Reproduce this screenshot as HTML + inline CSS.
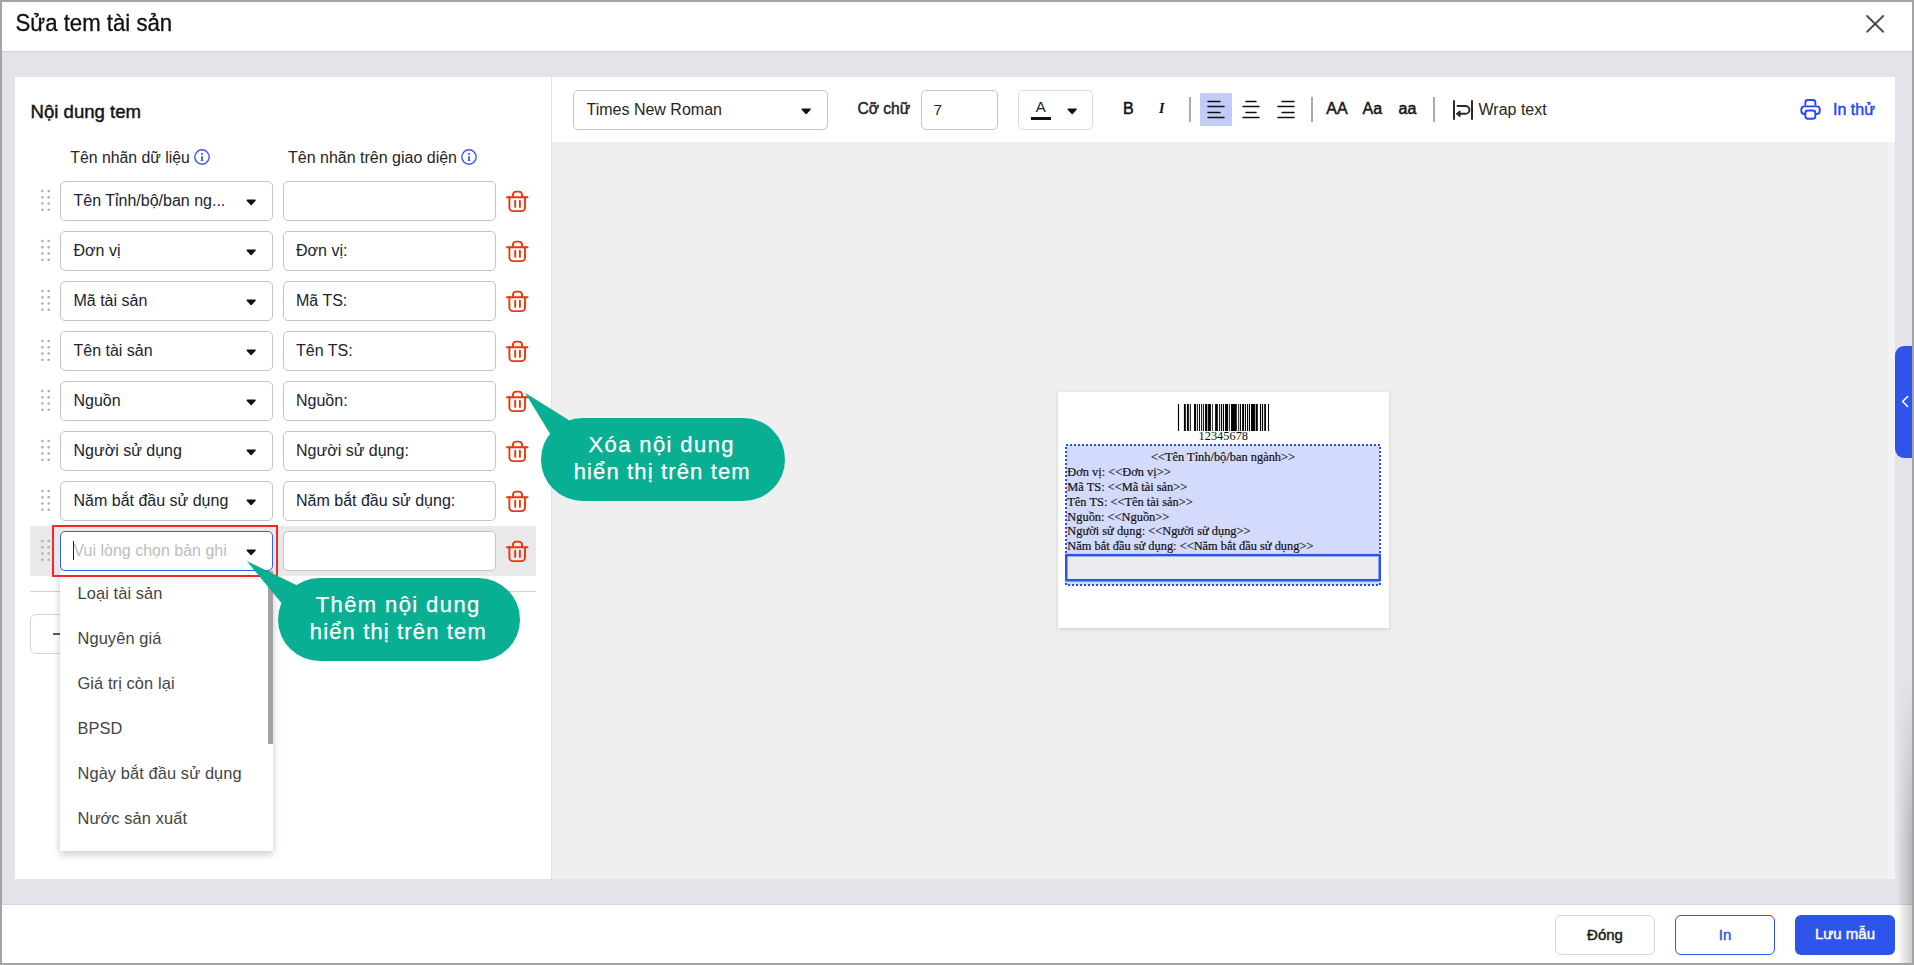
<!DOCTYPE html>
<html><head><meta charset="utf-8"><style>
*{box-sizing:border-box;margin:0;padding:0}
html,body{width:1914px;height:965px;overflow:hidden;background:#a4a4a4;font-family:"Liberation Sans",sans-serif;color:#1f1f1f}
.a{position:absolute}
#dlg{position:absolute;left:2px;top:2px;width:1910px;height:961px;background:#e2e4e9;overflow:hidden}
.t{position:absolute;white-space:nowrap;line-height:1}
.t16{position:absolute;white-space:nowrap;line-height:1;font-size:16px;color:#202330}
.box{position:absolute;border:1px solid #c4c4c4;border-radius:5px;background:#fff}
.btn{position:absolute;height:40px;width:100px;border-radius:6px;font-size:14px;text-align:center}
svg{overflow:visible}
</style></head><body>
<svg width="0" height="0" style="position:absolute"><defs>
<symbol id="trash" viewBox="0 0 26 26"><g fill="none" stroke="#e8380d" stroke-width="1.9" stroke-linecap="round" stroke-linejoin="round"><path d="M1.95 8.2H22.55"/><path d="M8 8.2V5.8A3.2 3.2 0 0 1 11.2 2.6H13.8A3.2 3.2 0 0 1 17 5.8V8.2"/><path d="M4.4 8.2V18.5A3.6 3.6 0 0 0 8 22.1H16.4A3.6 3.6 0 0 0 20 18.5V8.2"/><path d="M10.2 11.8V17.9M14.9 11.8V17.9"/></g></symbol>
<symbol id="dots" viewBox="0 0 12 24"><g fill="#acacb2"><circle cx="2.4" cy="1.9" r="1.25"/><circle cx="8.7" cy="1.9" r="1.25"/><circle cx="2.4" cy="8.3" r="1.25"/><circle cx="8.7" cy="8.3" r="1.25"/><circle cx="2.4" cy="14.5" r="1.25"/><circle cx="8.7" cy="14.5" r="1.25"/><circle cx="2.4" cy="20.7" r="1.25"/><circle cx="8.7" cy="20.7" r="1.25"/></g></symbol>
<symbol id="arr" viewBox="0 0 12 8"><path d="M1.2 1.2H9.1L5.15 5.6Z" fill="#111" stroke="#111" stroke-width="1.4" stroke-linejoin="round"/></symbol>
<symbol id="info" viewBox="0 0 18 18"><circle cx="9" cy="9" r="7.2" fill="none" stroke="#3a58f0" stroke-width="1.4"/><rect x="8.1" y="5" width="1.8" height="1.8" fill="#3a58f0"/><path d="M8.1 8.2H9.9V12.3H10.3V13H7.7V12.3H8.1Z" fill="#3a58f0"/></symbol>
</defs></svg>
<div class="a" style="left:2px;top:2px;width:1910px;height:961px;background:#e2e4e9"></div>
<div class="a" style="left:2px;top:2px;width:1910px;height:50px;background:#fff;border-bottom:1px solid #cdd0d5"></div>
<div class="t" style="left:15.5px;top:12.81px;font-size:22.2px;color:#111;-webkit-text-stroke:0.3px #111;transform:scaleY(1.06);transform-origin:0 18.8px">Sửa tem tài sản</div>
<svg class="a" style="left:1862px;top:11px" width="26" height="26"><path d="M5.1 5L21.2 20.7M21.2 5L5.1 20.7" stroke="#4a4a4a" stroke-width="1.9" stroke-linecap="round" fill="none"/></svg>
<div class="a" style="left:15px;top:77px;width:536px;height:802px;background:#fff"></div>
<div class="a" style="left:551px;top:77px;width:1344px;height:802px;background:#efefef;border-left:1px solid #e3e3e3"></div>
<div class="a" style="left:552px;top:77px;width:1343px;height:65px;background:#fff"></div>
<div class="a" style="left:2px;top:904px;width:1910px;height:59px;background:#fff;border-top:1px solid #d5d7dc"></div>
<div class="btn" style="left:1555px;top:915px;border:1px solid #d6d6d6;color:#1a1a1a;background:#fff"><span class="t" style="left:0;right:0;top:11.100000000000023px;font-size:15px;-webkit-text-stroke:0.45px currentColor">Đóng</span></div>
<div class="btn" style="left:1675px;top:915px;border:1.5px solid #2f55e8;color:#2f55e8;background:#fff"><span class="t" style="left:0;right:0;top:11.100000000000023px;font-size:15px;-webkit-text-stroke:0.45px currentColor">In</span></div>
<div class="btn" style="left:1795px;top:915px;background:#2e55eb;color:#fff"><span class="t" style="left:0;right:0;top:11.100000000000023px;font-size:15px;-webkit-text-stroke:0.45px currentColor">Lưu mẫu</span></div>
<div class="t" style="left:30.5px;top:102.86px;font-size:18.6px;color:#141414;-webkit-text-stroke:0.45px #141414">Nội dung tem</div>
<div class="t16" style="left:70.3px;top:150.43px;font-size:15.8px;color:#262626">Tên nhãn dữ liệu</div>
<svg class="a" style="left:193px;top:148px" width="18" height="18"><use href="#info"/></svg>
<div class="t16" style="left:288px;top:150.46px;color:#262626">Tên nhãn trên giao diện</div>
<svg class="a" style="left:460px;top:148px" width="18" height="18"><use href="#info"/></svg>
<svg class="a" style="left:40px;top:189px" width="12" height="24"><use href="#dots"/></svg>
<div class="box" style="left:60px;top:181px;width:213px;height:40px"></div>
<div class="t16" style="left:73.5px;top:193.36px">Tên Tỉnh/bộ/ban ng...</div>
<svg class="a" style="left:246px;top:199.2px" width="12" height="8"><use href="#arr"/></svg>
<div class="box" style="left:283px;top:181px;width:213px;height:40px"></div>
<svg class="a" style="left:505px;top:189px" width="26" height="26"><use href="#trash"/></svg>
<svg class="a" style="left:40px;top:239px" width="12" height="24"><use href="#dots"/></svg>
<div class="box" style="left:60px;top:231px;width:213px;height:40px"></div>
<div class="t16" style="left:73.5px;top:243.36px">Đơn vị</div>
<svg class="a" style="left:246px;top:249.2px" width="12" height="8"><use href="#arr"/></svg>
<div class="box" style="left:283px;top:231px;width:213px;height:40px"></div>
<div class="t16" style="left:296px;top:243.36px">Đơn vị:</div>
<svg class="a" style="left:505px;top:239px" width="26" height="26"><use href="#trash"/></svg>
<svg class="a" style="left:40px;top:289px" width="12" height="24"><use href="#dots"/></svg>
<div class="box" style="left:60px;top:281px;width:213px;height:40px"></div>
<div class="t16" style="left:73.5px;top:293.36px">Mã tài sản</div>
<svg class="a" style="left:246px;top:299.2px" width="12" height="8"><use href="#arr"/></svg>
<div class="box" style="left:283px;top:281px;width:213px;height:40px"></div>
<div class="t16" style="left:296px;top:293.36px">Mã TS:</div>
<svg class="a" style="left:505px;top:289px" width="26" height="26"><use href="#trash"/></svg>
<svg class="a" style="left:40px;top:339px" width="12" height="24"><use href="#dots"/></svg>
<div class="box" style="left:60px;top:331px;width:213px;height:40px"></div>
<div class="t16" style="left:73.5px;top:343.36px">Tên tài sản</div>
<svg class="a" style="left:246px;top:349.2px" width="12" height="8"><use href="#arr"/></svg>
<div class="box" style="left:283px;top:331px;width:213px;height:40px"></div>
<div class="t16" style="left:296px;top:343.36px">Tên TS:</div>
<svg class="a" style="left:505px;top:339px" width="26" height="26"><use href="#trash"/></svg>
<svg class="a" style="left:40px;top:389px" width="12" height="24"><use href="#dots"/></svg>
<div class="box" style="left:60px;top:381px;width:213px;height:40px"></div>
<div class="t16" style="left:73.5px;top:393.36px">Nguồn</div>
<svg class="a" style="left:246px;top:399.2px" width="12" height="8"><use href="#arr"/></svg>
<div class="box" style="left:283px;top:381px;width:213px;height:40px"></div>
<div class="t16" style="left:296px;top:393.36px">Nguồn:</div>
<svg class="a" style="left:505px;top:389px" width="26" height="26"><use href="#trash"/></svg>
<svg class="a" style="left:40px;top:439px" width="12" height="24"><use href="#dots"/></svg>
<div class="box" style="left:60px;top:431px;width:213px;height:40px"></div>
<div class="t16" style="left:73.5px;top:443.36px">Người sử dụng</div>
<svg class="a" style="left:246px;top:449.2px" width="12" height="8"><use href="#arr"/></svg>
<div class="box" style="left:283px;top:431px;width:213px;height:40px"></div>
<div class="t16" style="left:296px;top:443.36px">Người sử dụng:</div>
<svg class="a" style="left:505px;top:439px" width="26" height="26"><use href="#trash"/></svg>
<svg class="a" style="left:40px;top:489px" width="12" height="24"><use href="#dots"/></svg>
<div class="box" style="left:60px;top:481px;width:213px;height:40px"></div>
<div class="t16" style="left:73.5px;top:493.36px">Năm bắt đầu sử dụng</div>
<svg class="a" style="left:246px;top:499.2px" width="12" height="8"><use href="#arr"/></svg>
<div class="box" style="left:283px;top:481px;width:213px;height:40px"></div>
<div class="t16" style="left:296px;top:493.36px">Năm bắt đầu sử dụng:</div>
<svg class="a" style="left:505px;top:489px" width="26" height="26"><use href="#trash"/></svg>
<div class="a" style="left:30px;top:526px;width:506px;height:50px;background:#e9e9e9"></div>
<svg class="a" style="left:40px;top:539px" width="12" height="24"><use href="#dots"/></svg>
<div class="box" style="left:60px;top:531px;width:213px;height:40px;border:1.5px solid #2f62f5"></div>
<div class="t16" style="left:73.5px;top:543.36px;color:#bdbdbd">Vui lòng chọn bản ghi</div>
<div class="a" style="left:73px;top:541px;width:1px;height:19px;background:#222"></div>
<svg class="a" style="left:246px;top:549.2px" width="12" height="8"><use href="#arr"/></svg>
<div class="box" style="left:283px;top:531px;width:213px;height:40px"></div>
<svg class="a" style="left:505px;top:539px" width="26" height="26"><use href="#trash"/></svg>
<div class="a" style="left:30px;top:591px;width:506px;height:1px;background:#cfd0d8"></div>
<div class="a" style="left:30px;top:614px;width:150px;height:40px;border:1px solid #d5d5dc;border-radius:6px;background:#fff"></div>
<div class="a" style="left:53px;top:633px;width:10px;height:2px;background:#555a6a"></div>
<div class="a" style="left:60px;top:571px;width:213px;height:280px;background:#fff;box-shadow:0 3px 8px rgba(0,0,0,0.22)"></div>
<div class="t16" style="left:77.5px;top:585.12px;font-size:16.4px;letter-spacing:0.1px;color:#444">Loại tài sản</div>
<div class="t16" style="left:77.5px;top:630.12px;font-size:16.4px;letter-spacing:0.1px;color:#444">Nguyên giá</div>
<div class="t16" style="left:77.5px;top:675.12px;font-size:16.4px;letter-spacing:0.1px;color:#444">Giá trị còn lại</div>
<div class="t16" style="left:77.5px;top:720.12px;font-size:16.4px;letter-spacing:0.1px;color:#444">BPSD</div>
<div class="t16" style="left:77.5px;top:765.12px;font-size:16.4px;letter-spacing:0.1px;color:#444">Ngày bắt đầu sử dụng</div>
<div class="t16" style="left:77.5px;top:810.12px;font-size:16.4px;letter-spacing:0.1px;color:#444">Nước sản xuất</div>
<div class="a" style="left:268px;top:571px;width:4.5px;height:173px;background:#a3a3a3"></div>
<div class="a" style="left:52px;top:525px;width:225.5px;height:51.8px;border:2px solid #f2282e"></div>
<div class="box" style="left:573px;top:90px;width:255px;height:40px"></div>
<div class="t16" style="left:586.5px;top:101.96px;color:#262626">Times New Roman</div>
<svg class="a" style="left:800.5px;top:107.7px" width="12" height="8"><use href="#arr"/></svg>
<div class="t" style="left:857.5px;top:101.39px;font-size:15.6px;color:#222;-webkit-text-stroke:0.45px #222">Cỡ chữ</div>
<div class="box" style="left:921px;top:90px;width:77px;height:40px"></div>
<div class="t" style="left:933.5px;top:101.88px;font-size:15.5px;color:#262626">7</div>
<div class="box" style="left:1018px;top:90px;width:75px;height:40px;border-color:#dcdcdc"></div>
<div class="t" style="left:1035.8px;top:99.0px;font-size:15px;color:#222">A</div>
<div class="a" style="left:1031px;top:117px;width:20px;height:2.6px;background:#111"></div>
<svg class="a" style="left:1066.7px;top:108.3px" width="12" height="8"><use href="#arr"/></svg>
<div class="t" style="left:1123px;top:101.06px;font-size:16px;color:#111;-webkit-text-stroke:0.5px #111">B</div>
<div class="t" style="left:1159px;top:102.18px;font-size:14px;font-weight:bold;font-style:italic;font-family:'Liberation Serif',serif;color:#111">I</div>
<div class="a" style="left:1189px;top:97px;width:2px;height:25px;background:#ababab"></div>
<div class="a" style="left:1311px;top:97px;width:2px;height:25px;background:#ababab"></div>
<div class="a" style="left:1433px;top:97px;width:2px;height:25px;background:#ababab"></div>
<div class="a" style="left:1200px;top:93px;width:32px;height:33px;background:#c3cbf8"></div>
<svg class="a" style="left:0;top:0" width="1914" height="200"><g stroke="#111" stroke-width="1.5" stroke-linecap="round"><path d="M1208 101.5H1220"/><path d="M1208 106.5H1224"/><path d="M1208 112.4H1220"/><path d="M1208 117.5H1224"/><path d="M1246 101.5H1256"/><path d="M1243 106.5H1259"/><path d="M1246 112.4H1256"/><path d="M1243 117.5H1259"/><path d="M1282 101.5H1294"/><path d="M1278 106.5H1294"/><path d="M1282 112.4H1294"/><path d="M1278 117.5H1294"/></g><g fill="none" stroke="#2a2a2a" stroke-width="2" stroke-linecap="round"><path d="M1454 101V119M1472 101V119"/><path d="M1457.5 106H1465.5A3.9 3.9 0 0 1 1465.5 113.8H1459"/></g><path d="M1456.2 113.8L1460 110.8V116.8Z" fill="#2a2a2a" stroke="#2a2a2a" stroke-width="1" stroke-linejoin="round"/><g fill="#fff" stroke="#2447f5" stroke-width="1.9" stroke-linejoin="round"><path d="M1805.35 105.5V102.5A2.45 2.45 0 0 1 1807.8 100.05H1812.9A2.45 2.45 0 0 1 1815.35 102.5V105.5" fill="none"/><rect x="1801.35" y="106.35" width="18.4" height="7.7" rx="3"/><rect x="1805.35" y="110.45" width="10" height="8.3" rx="2.5"/></g></svg>
<div class="t" style="left:1326.3px;top:101.06px;font-size:16px;color:#161616;-webkit-text-stroke:0.5px #161616">AA</div>
<div class="t" style="left:1362.5px;top:101.06px;font-size:16px;color:#161616;-webkit-text-stroke:0.5px #161616">Aa</div>
<div class="t" style="left:1398.5px;top:101.06px;font-size:16px;color:#161616;-webkit-text-stroke:0.5px #161616">aa</div>
<div class="t16" style="left:1478.5px;top:102.46px;color:#262626">Wrap text</div>
<div class="t" style="left:1833px;top:102.06px;font-size:16px;color:#2447f5;-webkit-text-stroke:0.45px #2447f5">In thử</div>
<div class="a" style="left:1058px;top:392px;width:331px;height:236px;background:#fff;box-shadow:0 1px 4px rgba(0,0,0,0.14)"></div>
<svg class="a" style="left:0;top:0" width="1914" height="700"><g fill="#000"><rect x="1177.93" y="404" width="1.15" height="27"/><rect x="1183.91" y="404" width="1.90" height="27"/><rect x="1186.95" y="404" width="1.90" height="27"/><rect x="1189.83" y="404" width="0.98" height="27"/><rect x="1194.02" y="404" width="2.13" height="27"/><rect x="1197.01" y="404" width="0.86" height="27"/><rect x="1199.02" y="404" width="0.98" height="27"/><rect x="1201.03" y="404" width="0.86" height="27"/><rect x="1202.87" y="404" width="1.03" height="27"/><rect x="1205.06" y="404" width="2.30" height="27"/><rect x="1208.05" y="404" width="2.87" height="27"/><rect x="1212.07" y="404" width="0.75" height="27"/><rect x="1215.11" y="404" width="2.70" height="27"/><rect x="1219.14" y="404" width="0.86" height="27"/><rect x="1220.86" y="404" width="1.15" height="27"/><rect x="1222.87" y="404" width="1.15" height="27"/><rect x="1225.06" y="404" width="2.99" height="27"/><rect x="1228.91" y="404" width="0.86" height="27"/><rect x="1231.03" y="404" width="5.75" height="27"/><rect x="1238.10" y="404" width="0.75" height="27"/><rect x="1239.83" y="404" width="1.15" height="27"/><rect x="1242.13" y="404" width="2.01" height="27"/><rect x="1245.00" y="404" width="0.98" height="27"/><rect x="1247.01" y="404" width="1.15" height="27"/><rect x="1249.02" y="404" width="0.98" height="27"/><rect x="1251.03" y="404" width="3.91" height="27"/><rect x="1255.63" y="404" width="2.18" height="27"/><rect x="1259.94" y="404" width="1.15" height="27"/><rect x="1261.95" y="404" width="1.15" height="27"/><rect x="1264.25" y="404" width="1.72" height="27"/><rect x="1267.99" y="404" width="0.98" height="27"/></g><rect x="1066" y="445" width="314" height="140" fill="#d3dafb" stroke="#1f4ef5" stroke-width="2" stroke-dasharray="2 2" shape-rendering="crispEdges"/><rect x="1066.25" y="555.15" width="313.5" height="25.1" fill="#ebebf0" stroke="#2b54f0" stroke-width="2.5"/></svg>
<div class="t" style="left:1198.5px;top:430.31px;font-size:12.4px;font-family:'Liberation Serif',serif;color:#111">12345678</div>
<div class="t" style="left:1065px;width:316px;text-align:center;top:451.01px;font-size:12.4px;font-family:'Liberation Serif',serif;color:#111;-webkit-text-stroke:0.2px #111">&lt;&lt;Tên Tỉnh/bộ/ban ngành&gt;&gt;</div>
<div class="t" style="left:1067.3px;top:465.88px;font-size:12.4px;font-family:'Liberation Serif',serif;color:#111;-webkit-text-stroke:0.2px #111">Đơn vị: &lt;&lt;Đơn vị&gt;&gt;</div>
<div class="t" style="left:1067.3px;top:480.75px;font-size:12.4px;font-family:'Liberation Serif',serif;color:#111;-webkit-text-stroke:0.2px #111">Mã TS: &lt;&lt;Mã tài sản&gt;&gt;</div>
<div class="t" style="left:1067.3px;top:495.62px;font-size:12.4px;font-family:'Liberation Serif',serif;color:#111;-webkit-text-stroke:0.2px #111">Tên TS: &lt;&lt;Tên tài sản&gt;&gt;</div>
<div class="t" style="left:1067.3px;top:510.5px;font-size:12.4px;font-family:'Liberation Serif',serif;color:#111;-webkit-text-stroke:0.2px #111">Nguồn: &lt;&lt;Nguồn&gt;&gt;</div>
<div class="t" style="left:1067.3px;top:525.37px;font-size:12.4px;font-family:'Liberation Serif',serif;color:#111;-webkit-text-stroke:0.2px #111">Người sử dụng: &lt;&lt;Người sử dụng&gt;&gt;</div>
<div class="t" style="left:1067.3px;top:540.24px;font-size:12.4px;font-family:'Liberation Serif',serif;color:#111;-webkit-text-stroke:0.2px #111">Năm bắt đầu sử dụng: &lt;&lt;Năm bắt đầu sử dụng&gt;&gt;</div>
<div class="a" style="left:1888px;top:142px;width:7px;height:737px;background:#f2f2f4"></div>
<div class="a" style="left:1897px;top:680px;width:15px;height:283px;background:linear-gradient(to right,rgba(0,0,0,0),rgba(0,0,0,0.2));-webkit-mask-image:linear-gradient(to bottom,transparent,#000 160px)"></div>
<div class="a" style="left:1895px;top:346px;width:17px;height:112px;background:#2e54ec;border-radius:9px 0 0 9px"></div>
<svg class="a" style="left:0;top:0" width="1914" height="500"><path d="M1907.6 396.5L1902.6 401.5L1907.6 406.5" fill="none" stroke="#fff" stroke-width="1.6" stroke-linecap="round" stroke-linejoin="round"/></svg>
<svg class="a" style="left:0;top:0" width="1914" height="965"><g fill="#09af92"><rect x="541" y="418" width="244" height="83" rx="41.5"/><path d="M525 392.7L550 433.7L565 440L569 420.3Z"/><rect x="278" y="578" width="242" height="83" rx="41.5"/><path d="M246.7 561L281.4 603L292 600L296.3 585.1Z"/></g></svg>
<div class="t" style="left:511.7px;width:300px;text-align:center;top:434.18px;font-size:22px;letter-spacing:1.4px;color:#fff;-webkit-text-stroke:0.25px #fff">Xóa nội dung</div>
<div class="t" style="left:512.2700000000001px;width:300px;text-align:center;top:460.98px;font-size:22px;letter-spacing:1.14px;color:#fff;-webkit-text-stroke:0.25px #fff">hiển thị trên tem</div>
<div class="t" style="left:248.2px;width:300px;text-align:center;top:594.28px;font-size:22px;letter-spacing:1.4px;color:#fff;-webkit-text-stroke:0.25px #fff">Thêm nội dung</div>
<div class="t" style="left:248.37px;width:300px;text-align:center;top:621.08px;font-size:22px;letter-spacing:1.14px;color:#fff;-webkit-text-stroke:0.25px #fff">hiển thị trên tem</div>
</body></html>
